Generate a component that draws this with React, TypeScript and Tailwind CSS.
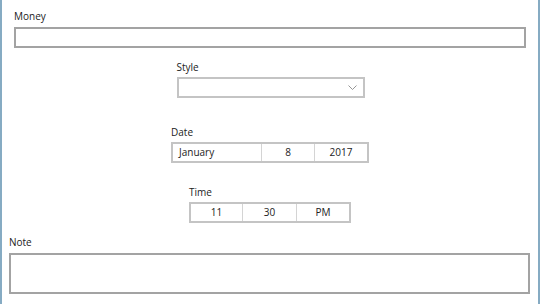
import React from 'react';

const font = { fontFamily: '"Open Sans", "Noto Sans", sans-serif' };

const Label = ({ text, className = '' }: { text: string; className?: string }) => (
    <div className={`text-[10px] leading-[14px] text-[#222] ${className}`}>{text}</div>
);

const App = () => {
    return (
        <div className="w-[540px] h-[304px] bg-white border-x-2 border-[#86abc3] overflow-hidden" style={font}>
            <div className="flex flex-col">
                {/* Money */}
                <div className="pl-[12px] pr-[12px] pt-[9px]">
                    <Label text="Money" className="mb-[4px]" />
                    <div className="h-[21px] border-2 border-[#a3a3a3] bg-white" />
                </div>

                {/* Style */}
                <div className="flex justify-center mt-[12px]">
                    <div className="w-[188px] ml-[1px]">
                        <Label text="Style" className="mb-[3px]" />
                        <div className="h-[21px] border-2 border-[#c4c4c4] bg-white flex items-center justify-end pr-[6px]">
                            <svg width="9" height="5" viewBox="0 0 9 5" fill="none" stroke="#8a8a8a" strokeWidth="0.9">
                                <path d="M0.5 0.5l4 4 4-4" />
                            </svg>
                        </div>
                    </div>
                </div>

                {/* Date */}
                <div className="flex justify-center mt-[27px]">
                    <div className="w-[198px]">
                        <Label text="Date" className="mb-[3px]" />
                        <div className="h-[21px] border-2 border-[#c4c4c4] bg-white flex text-[10px] text-[#222]">
                            <div className="w-[89px] border-r border-[#d4d4d4] flex items-center pl-[6px]">January</div>
                            <div className="w-[53px] border-r border-[#d4d4d4] flex items-center justify-center">8</div>
                            <div className="flex-1 flex items-center justify-center">2017</div>
                        </div>
                    </div>
                </div>

                {/* Time */}
                <div className="flex justify-center mt-[22px]">
                    <div className="w-[162px]">
                        <Label text="Time" className="mb-[3px]" />
                        <div className="h-[21px] border-2 border-[#c4c4c4] bg-white flex text-[10px] text-[#222]">
                            <div className="w-[52px] border-r border-[#d4d4d4] flex items-center justify-center">11</div>
                            <div className="w-[54px] border-r border-[#d4d4d4] flex items-center justify-center">30</div>
                            <div className="flex-1 flex items-center justify-center">PM</div>
                        </div>
                    </div>
                </div>

                {/* Note */}
                <div className="pl-[7px] pr-[8px] mt-[12px]">
                    <Label text="Note" className="mb-[4px]" />
                    <div className="h-[41px] border-2 border-[#a3a3a3] bg-white" />
                </div>
            </div>
        </div>
    );
};

export default App;
